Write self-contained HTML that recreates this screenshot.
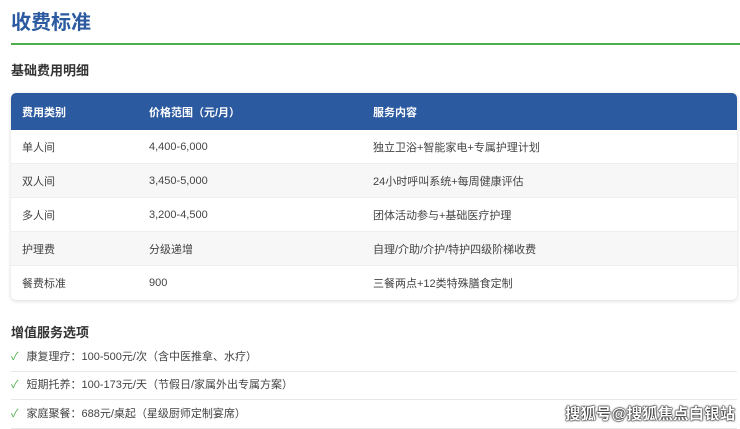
<!DOCTYPE html>
<html><head><meta charset="utf-8"><style>
*{margin:0;padding:0;box-sizing:border-box}
body{width:740px;height:429px;overflow:hidden;background:#fff;font-family:"Liberation Sans","Noto Sans CJK SC",sans-serif;color:#333;position:relative}
.t{position:absolute;left:11px;top:9px;font-size:20px;font-weight:bold;color:#2b5aa0;line-height:28px}
.g{position:absolute;left:11px;right:0;top:43px;height:2px;background:#4cae4c}
.s{position:absolute;left:11px;font-size:13px;font-weight:bold;color:#333;line-height:18px}
.tb{position:absolute;left:11px;top:93px;width:726px;border-radius:5px;overflow:hidden;box-shadow:0 1px 4px rgba(0,0,0,.15)}
.r{height:34px;display:flex;align-items:center;font-size:11px;color:#444;border-bottom:1px solid #eee}
.r.h{height:37px;background:#2b5aa0;color:#fff;font-weight:bold;border:none}
.r.a{background:#f7f7f7}
.r span{position:absolute}
.c1{left:11px}.c2{left:138px}.c3{left:362px}
.it{position:absolute;left:11px;width:726px;height:29px;font-size:11px;color:#444;line-height:29px;border-bottom:1px solid #e8e8e8}
.it b{color:#4cae4c;font-weight:normal;margin-right:8px}
.wm{position:absolute;left:565px;top:402px;font-size:15.5px;font-weight:bold;color:#fff;text-shadow:0 0 1px #000,0 0 1px #000,0 0 2px #000}
</style></head><body>
<div class="t">收费标准</div>
<div class="g"></div>
<div class="s" style="top:62px">基础费用明细</div>
<div class="tb">
<div class="r h" style="position:relative"><span class="c1">费用类别</span><span class="c2">价格范围（元/月）</span><span class="c3">服务内容</span></div>
<div class="r" style="position:relative"><span class="c1">单人间</span><span class="c2">4,400-6,000</span><span class="c3">独立卫浴+智能家电+专属护理计划</span></div>
<div class="r a" style="position:relative"><span class="c1">双人间</span><span class="c2">3,450-5,000</span><span class="c3">24小时呼叫系统+每周健康评估</span></div>
<div class="r" style="position:relative"><span class="c1">多人间</span><span class="c2">3,200-4,500</span><span class="c3">团体活动参与+基础医疗护理</span></div>
<div class="r a" style="position:relative"><span class="c1">护理费</span><span class="c2">分级递增</span><span class="c3">自理/介助/介护/特护四级阶梯收费</span></div>
<div class="r" style="position:relative;border:none"><span class="c1">餐费标准</span><span class="c2">900</span><span class="c3">三餐两点+12类特殊膳食定制</span></div>
</div>
<div class="s" style="top:324px">增值服务选项</div>
<div class="it" style="top:343px"><b>✓</b>康复理疗：100-500元/次（含中医推拿、水疗）</div>
<div class="it" style="top:371px"><b>✓</b>短期托养：100-173元/天（节假日/家属外出专属方案）</div>
<div class="it" style="top:400px"><b>✓</b>家庭聚餐：688元/桌起（星级厨师定制宴席）</div>
<div class="wm">搜狐号@搜狐焦点白银站</div>
</body></html>
